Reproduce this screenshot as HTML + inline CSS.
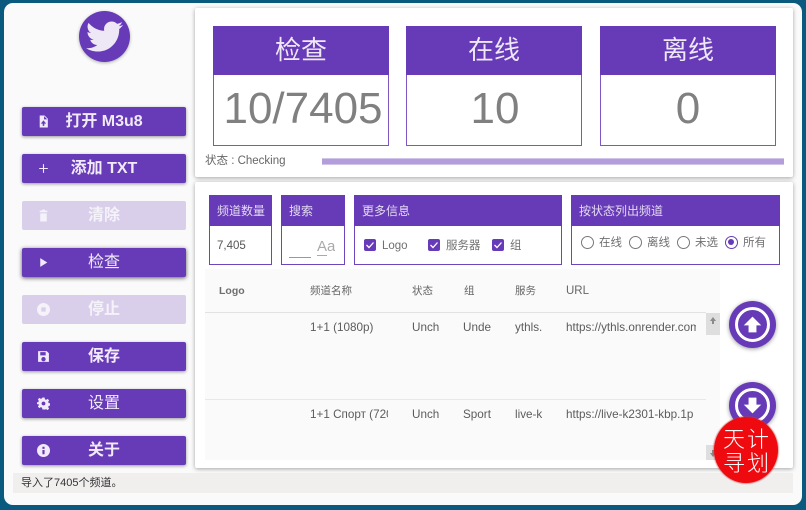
<!DOCTYPE html>
<html><head><meta charset="utf-8">
<style>
html,body{margin:0;padding:0;width:806px;height:510px;overflow:hidden;background:#0a5a80;}
*{box-sizing:border-box;}
body{font-family:"Liberation Sans","Noto Sans CJK SC",sans-serif;position:relative;}
.a{position:absolute;white-space:nowrap;overflow:hidden;}
#win{position:absolute;left:4px;top:3px;width:798px;height:502px;background:#fafafa;border-radius:9px;}
.btn{position:absolute;left:22px;width:164px;height:29px;background:#673ab7;border-radius:2px;color:#f1ebf9;font-size:16px;font-weight:bold;line-height:30px;text-align:center;box-shadow:0 1px 3px rgba(0,0,0,.4);}
.btn.off{background:#d9cfea;color:#f5f2fa;box-shadow:none;}
.btn svg{position:absolute;left:15px;top:8px;width:13px;height:13px;fill:currentColor;}
.panel{position:absolute;left:195px;width:598px;background:#fff;border-radius:2px;box-shadow:0 1px 4px rgba(0,0,0,.35);}
.card{position:absolute;top:26px;width:176px;height:120px;background:#fff;border:1px solid #7e57c2;}
.card .h{position:absolute;left:-1px;top:-1px;width:176px;height:49px;background:#673ab7;color:#ede7f6;font-size:26px;line-height:49px;text-align:center;}
.card .v{position:absolute;left:0;right:0;top:47px;height:70px;line-height:70px;font-size:44px;color:#808080;text-align:center;white-space:nowrap;overflow:hidden;}
.sc{position:absolute;top:195px;height:70px;background:#fff;border:1px solid #6f45bd;}
.sc .h{position:absolute;left:-1px;top:-1px;right:-1px;height:31px;background:#673ab7;color:#e3daf3;font-size:12px;line-height:33px;padding-left:8px;}
.cb{position:absolute;top:239px;width:12px;height:12px;background:#673ab7;border-radius:2px;}
.cb svg{position:absolute;left:1px;top:1px;width:10px;height:10px;}
.t{color:#707070;font-size:11.5px;}
.th{color:#6e6e6e;font-size:10.5px;font-weight:bold;top:284px;height:14px;line-height:14px;}
.td{color:#5c5c5c;font-size:11.7px;height:16px;line-height:16px;}
.rd{position:absolute;top:236px;width:13px;height:13px;border:1.5px solid #777;border-radius:50%;}
.fab{position:absolute;left:729px;width:47px;height:47px;border-radius:50%;background:#673ab7;box-shadow:0 1px 4px rgba(0,0,0,.4);}
.fab i{position:absolute;left:6px;top:6px;width:35px;height:35px;border:3.5px solid #fff;border-radius:50%;}
.fab svg{position:absolute;left:13px;top:13px;width:21px;height:21px;fill:#fff;}
</style></head>
<body>
<div id="win"></div>

<div class="a" style="left:79px;top:11px;width:51px;height:51px;border-radius:50%;background:#673ab7;box-shadow:0 1px 3px rgba(0,0,0,.3);">
<svg viewBox="0 0 512 512" style="position:absolute;left:7px;top:7px;width:37px;height:37px;fill:#ede7f6"><path d="M459.37 151.716c.325 4.548.325 9.097.325 13.645 0 138.72-105.583 298.558-298.558 298.558-59.452 0-114.68-17.219-161.137-47.106 8.447.974 16.568 1.299 25.34 1.299 49.055 0 94.213-16.568 130.274-44.832-46.132-.975-84.792-31.188-98.112-72.772 6.498.974 12.995 1.624 19.818 1.624 9.421 0 18.843-1.3 27.614-3.573-48.081-9.747-84.143-51.98-84.143-102.985v-1.299c13.969 7.797 30.214 12.67 47.431 13.319-28.264-18.843-46.781-51.005-46.781-87.391 0-19.492 5.197-37.36 14.294-52.954 51.655 63.675 129.3 105.258 216.365 109.807-1.624-7.797-2.599-15.918-2.599-24.04 0-57.828 46.782-104.934 104.934-104.934 30.213 0 57.502 12.67 76.67 33.137 23.715-4.548 46.456-13.32 66.599-25.34-7.798 24.366-24.366 44.833-46.132 57.827 21.117-2.273 41.584-8.122 60.426-16.243-14.292 20.791-32.161 39.308-52.628 54.253z"/></svg>
</div>

<div class="btn" style="top:107px"><svg viewBox="0 0 24 24"><path d="M5 1h9l6 6v16H5zM13 2v6h6zM12 10l-5 6h3.500v4h3v-4H17z" fill-rule="evenodd"/></svg>打开 M3u8</div>
<div class="btn" style="top:154px"><svg viewBox="0 0 24 24"><path d="M11 4h2v7h7v2h-7v7h-2v-7H4v-2h7z"/></svg>添加 TXT</div>
<div class="btn off" style="top:201px"><svg viewBox="0 0 24 24"><path d="M6 8h12v15H6zM5 3h4l1-2h4l1 2h4v3H5z"/></svg>清除</div>
<div class="btn" style="top:248px;font-weight:normal;box-shadow:0 1px 4px rgba(0,0,0,.65)"><svg viewBox="0 0 24 24"><path d="M6 4l13 8-13 8z"/></svg>检查</div>
<div class="btn off" style="top:295px"><svg viewBox="0 0 24 24"><path d="M12 0a12 12 0 1 0 0 24 12 12 0 0 0 0-24zM8 8h8v8H8z" fill-rule="evenodd"/></svg>停止</div>
<div class="btn" style="top:342px"><svg viewBox="0 0 24 24"><path d="M2 2h16l4 4v16H2zM6 4v6h10V4zM12 13a4 4 0 1 0 0 8 4 4 0 0 0 0-8z" fill-rule="evenodd"/></svg>保存</div>
<div class="btn" style="top:389px;font-weight:normal"><svg viewBox="0 0 24 24"><path d="M10 1h4l.6 3.200 2.300 1 2.700-1.800 2.800 2.800-1.800 2.700 1 2.300 3.200.6v4l-3.200.6-1 2.300 1.800 2.700-2.800 2.800-2.700-1.800-2.300 1L14 23h-4l-.6-3.200-2.300-1-2.700 1.800-2.800-2.800 1.800-2.700-1-2.300L-.8 14v-4l3.200-.6 1-2.300-1.800-2.700 2.800-2.800 2.700 1.800 2.300-1zM12 8.500a3.500 3.500 0 1 0 0 7 3.500 3.500 0 0 0 0-7z" fill-rule="evenodd"/></svg>设置</div>
<div class="btn" style="top:436px"><svg viewBox="0 0 24 24"><path d="M12 0a12 12 0 1 0 0 24 12 12 0 0 0 0-24zM10 5h4v4h-4zM10 11h4v8h-4z" fill-rule="evenodd"/></svg>关于</div>

<div class="a" style="left:13px;top:473px;width:780px;height:20px;background:#f1eeee;"></div>
<div class="a" style="left:21px;top:475px;font-size:11px;line-height:16px;color:#333;">导入了7405个频道。</div>

<div class="panel" style="top:8px;height:169px;"></div>
<div class="card" style="left:213px"><div class="h">检查</div><div class="v" style="text-indent:4px">10/7405</div></div>
<div class="card" style="left:406px"><div class="h">在线</div><div class="v" style="text-indent:2px">10</div></div>
<div class="card" style="left:600px"><div class="h">离线</div><div class="v">0</div></div>
<div class="a" style="left:205px;top:153px;font-size:11.5px;line-height:16px;color:#666;">状态 : Checking</div>
<div class="a" style="left:322px;top:158px;width:462px;height:7px;background:#d1c4e9;"><div style="position:absolute;left:0;right:0;top:1px;height:5px;background:#b39ddb"></div></div>

<div class="panel" style="top:182px;height:286px;"></div>
<div class="sc" style="left:209px;width:63px"><div class="h">频道数量</div></div>
<div class="a t" style="left:217px;top:238px;line-height:16px;color:#555">7,405</div>
<div class="sc" style="left:281px;width:64px"><div class="h">搜索</div></div>
<div class="a" style="left:289px;top:257px;width:22px;height:1px;background:#999"></div>
<div class="a" style="left:317px;top:238px;font-size:15px;line-height:18px;color:#aaa;"><span style="border-bottom:1px solid #aaa">A</span>a</div>
<div class="sc" style="left:354px;width:208px;"><div class="h">更多信息</div></div>
<div class="cb" style="left:364px"><svg viewBox="0 0 10 10"><path d="M1.500 5l2.500 2.500 4.500-5" fill="none" stroke="#fff" stroke-width="1.300"/></svg></div>
<div class="a t" style="left:382px;top:238px;line-height:16px">Logo</div>
<div class="cb" style="left:428px"><svg viewBox="0 0 10 10"><path d="M1.500 5l2.500 2.500 4.500-5" fill="none" stroke="#fff" stroke-width="1.300"/></svg></div>
<div class="a t" style="left:446px;top:238px;line-height:16px">服务器</div>
<div class="cb" style="left:492px"><svg viewBox="0 0 10 10"><path d="M1.500 5l2.500 2.500 4.500-5" fill="none" stroke="#fff" stroke-width="1.300"/></svg></div>
<div class="a t" style="left:510px;top:238px;line-height:16px">组</div>

<div class="sc" style="left:571px;width:209px"><div class="h">按状态列出频道</div></div>
<div class="rd" style="left:581px"></div><div class="a t" style="left:599px;top:235px;line-height:16px">在线</div>
<div class="rd" style="left:629px"></div><div class="a t" style="left:647px;top:235px;line-height:16px">离线</div>
<div class="rd" style="left:677px"></div><div class="a t" style="left:695px;top:235px;line-height:16px">未选</div>
<div class="rd" style="left:725px;border-color:#673ab7"><div style="position:absolute;left:2px;top:2px;width:6px;height:6px;border-radius:50%;background:#673ab7"></div></div><div class="a t" style="left:743px;top:235px;line-height:16px">所有</div>

<div class="a" style="left:205px;top:269px;width:515px;height:191px;background:#fafafa"></div>
<div class="a" style="left:205px;top:312px;width:501px;height:1px;background:#e2e2e2"></div>
<div class="a" style="left:205px;top:399px;width:501px;height:1px;background:#e8e8e8"></div>
<div class="a th" style="left:219px">Logo</div>
<div class="a th" style="left:310px;font-weight:normal;color:#666">频道名称</div>
<div class="a th" style="left:412px;font-weight:normal;color:#666">状态</div>
<div class="a th" style="left:464px;font-weight:normal;color:#666">组</div>
<div class="a th" style="left:515px;font-weight:normal;color:#666">服务</div>
<div class="a th" style="left:566px;font-weight:normal;color:#666;font-size:11.5px">URL</div>

<div class="a td" style="left:310px;top:320px;width:78px">1+1 (1080p)</div>
<div class="a td" style="left:412px;top:320px;width:27px">Unch</div>
<div class="a td" style="left:463px;top:320px;width:29px">Unde</div>
<div class="a td" style="left:515px;top:320px;width:27px">ythls.</div>
<div class="a td" style="left:566px;top:320px;width:130px">https://ythls.onrender.com</div>
<div class="a td" style="left:310px;top:407px;width:78px">1+1 Спорт (720p)</div>
<div class="a td" style="left:412px;top:407px;width:27px">Unch</div>
<div class="a td" style="left:463px;top:407px;width:28px">Sport</div>
<div class="a td" style="left:515px;top:407px;width:27px">live-k</div>
<div class="a td" style="left:566px;top:407px;width:130px">https://live-k2301-kbp.1p</div>

<div class="a" style="left:706px;top:313px;width:14px;height:22px;background:#dedede"><svg viewBox="0 0 14 14" style="position:absolute;left:0;top:1px;width:14px;height:14px;"><path d="M7 3l3 4H8v3H6V7H4z" fill="#8a8a8a"/></svg></div>
<div class="a" style="left:706px;top:445px;width:14px;height:15px;background:#dedede"><svg viewBox="0 0 14 14" style="position:absolute;left:0;top:1px;width:14px;height:14px;"><path d="M7 11l3-4H8V4H6v3H4z" fill="#8a8a8a"/></svg></div>

<div class="fab" style="top:301px"><i></i><svg viewBox="0 0 24 24"><path d="M12 3l10 10h-5.500v8h-9v-8H2z"/></svg></div>
<div class="fab" style="top:382px"><i></i><svg viewBox="0 0 24 24"><path d="M12 21L2 11h5.500V3h9v8H22z"/></svg></div>

<div class="a" style="left:714px;top:417px;width:64px;height:66px;border-radius:50%;background:#ee0a0f;box-shadow:0 0 1px 1px rgba(200,60,60,.5);">
<div style="position:absolute;left:9px;top:9px;width:54px;font-size:22px;line-height:24px;color:#fff;letter-spacing:2px;white-space:normal;font-family:'Noto Sans CJK SC',sans-serif;font-weight:300;">天计<br>寻划</div>
</div>
</body></html>
